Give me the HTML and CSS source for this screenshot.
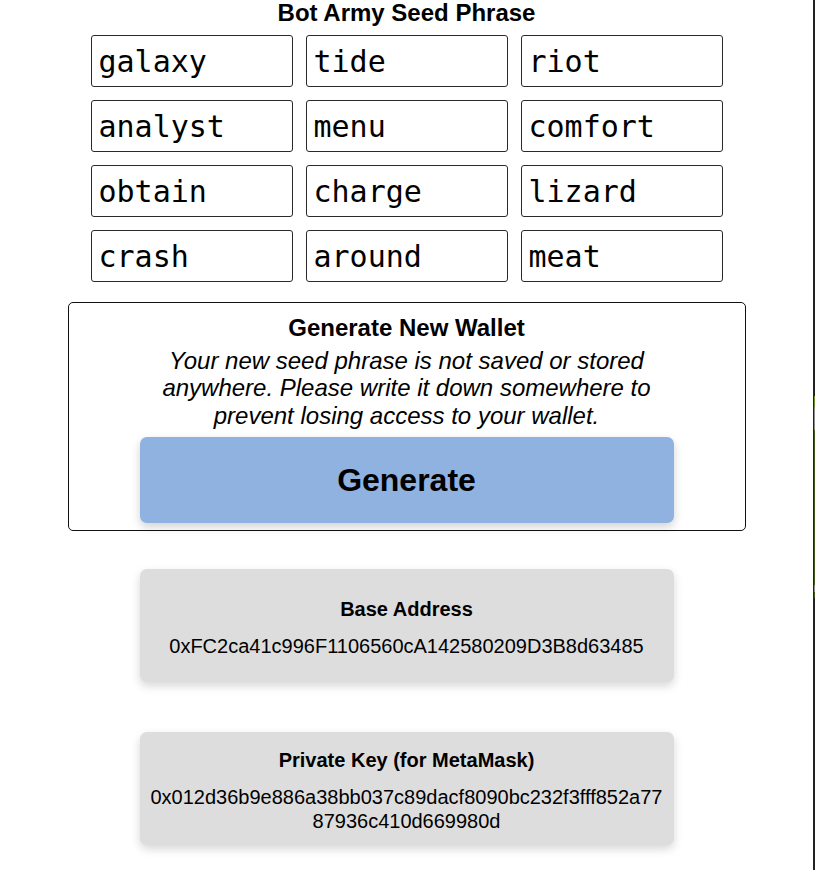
FILE: index.html
```html
<!DOCTYPE html>
<html lang="en">
<head>
<meta charset="utf-8">
<title>Bot Army Seed Phrase</title>
<link rel="stylesheet" href="styles.css">
</head>
<body>
<div class="page">
  <main class="main">
    <h1 class="title">Bot Army Seed Phrase</h1>
    <div class="words">
      <div class="word">galaxy</div>
      <div class="word">tide</div>
      <div class="word">riot</div>
      <div class="word">analyst</div>
      <div class="word">menu</div>
      <div class="word">comfort</div>
      <div class="word">obtain</div>
      <div class="word">charge</div>
      <div class="word">lizard</div>
      <div class="word">crash</div>
      <div class="word">around</div>
      <div class="word">meat</div>
    </div>
    <section class="wallet">
      <h2 class="wallet-title">Generate New Wallet</h2>
      <p class="wallet-note">Your new seed phrase is not saved or stored anywhere. Please write it down somewhere to prevent losing access to your wallet.</p>
      <button class="gen-btn" type="button">Generate</button>
    </section>
    <div class="card card-first">
      <h4 class="card-title">Base Address</h4>
      <div class="card-value">0xFC2ca41c996F1106560cA142580209D3B8d63485</div>
    </div>
    <div class="card card-second">
      <h4 class="card-title">Private Key (for MetaMask)</h4>
      <div class="card-value">0x012d36b9e886a38bb037c89dacf8090bc232f3fff852a7787936c410d669980d</div>
    </div>
  </main>
  <div class="edge">
    <div class="edge-seg edge-dark edge-top"></div>
    <div class="edge-seg edge-lime"></div>
    <div class="edge-seg edge-gray edge-gray1"></div>
    <div class="edge-seg edge-green"></div>
    <div class="edge-seg edge-gray edge-gray2"></div>
    <div class="edge-seg edge-green edge-green2"></div>
    <div class="edge-seg edge-dark edge-rest"></div>
  </div>
</div>
</body>
</html>
```

FILE: styles.css
```css
html, body {
  margin: 0;
  padding: 0;
  background: #ffffff;
}

body {
  font-family: "Liberation Sans", Arial, sans-serif;
  font-size: 24px;
  color: #000;
}

.page {
  display: flex;
  height: 870px;
  overflow: hidden;
}

.main {
  flex: 1;
  display: flex;
  flex-direction: column;
  align-items: center;
}

.title {
  margin: 0 0 9px;
  font-size: 24px;
  font-weight: bold;
  line-height: 26px;
}

.words {
  display: grid;
  grid-template-columns: repeat(3, 202px);
  gap: 13px;
}

.word {
  height: 52px;
  box-sizing: border-box;
  border: 1px solid #2a2a2a;
  border-radius: 3px;
  padding: 0 7px;
  display: flex;
  align-items: center;
  font-family: "DejaVu Sans Mono", monospace;
  font-size: 30px;
}

.wallet {
  margin-top: 20px;
  width: 678px;
  box-sizing: border-box;
  border: 1px solid #111;
  border-radius: 5px;
  padding: 11px 0 7px;
  display: flex;
  flex-direction: column;
  align-items: center;
  text-align: center;
}

.wallet-title {
  margin: 0;
  font-size: 24px;
  font-weight: bold;
  line-height: 27.6px;
}

.wallet-note {
  margin: 5px 0 0;
  width: 534px;
  font-style: italic;
  font-size: 24px;
  line-height: 27.6px;
}

.gen-btn {
  margin-top: 8px;
  width: 534px;
  height: 86px;
  border: none;
  border-radius: 7px;
  background: #8fb2e0;
  box-shadow: 0 4px 10px rgba(0, 0, 0, 0.18);
  font-family: "Liberation Sans", Arial, sans-serif;
  font-size: 32px;
  font-weight: bold;
  color: #000;
  padding: 0;
}

.card {
  width: 534px;
  height: 113px;
  box-sizing: border-box;
  padding: 4px 10px 0;
  background: #dddddd;
  border-radius: 7px;
  box-shadow: 0 4px 10px rgba(0, 0, 0, 0.16);
  display: flex;
  flex-direction: column;
  justify-content: center;
  align-items: center;
  text-align: center;
}

.card-first {
  margin-top: 38px;
}

.card-second {
  margin-top: 50px;
}

.card-title {
  margin: 0 0 12.5px;
  font-size: 20px;
  font-weight: bold;
  line-height: 23px;
}

.card-value {
  width: 100%;
  font-size: 20px;
  line-height: 24px;
  word-break: break-all;
}

.edge {
  width: 2px;
  display: flex;
  flex-direction: column;
  background: #222;
}

.edge-seg {
  flex: none;
}

.edge-dark {
  background: #222;
}

.edge-top {
  height: 396px;
}

.edge-lime {
  height: 11px;
  background: linear-gradient(to right, #222 50%, #6a8c2c 50%);
}

.edge-gray {
  background: linear-gradient(to right, #222 50%, #8a8a8a 50%);
}

.edge-gray1 {
  height: 23px;
}

.edge-green {
  height: 155px;
  background: linear-gradient(to right, #222 50%, #3f5a1c 50%);
}

.edge-gray2 {
  height: 7px;
}

.edge-green2 {
  height: 6px;
}

.edge-rest {
  flex: 1;
}
```
